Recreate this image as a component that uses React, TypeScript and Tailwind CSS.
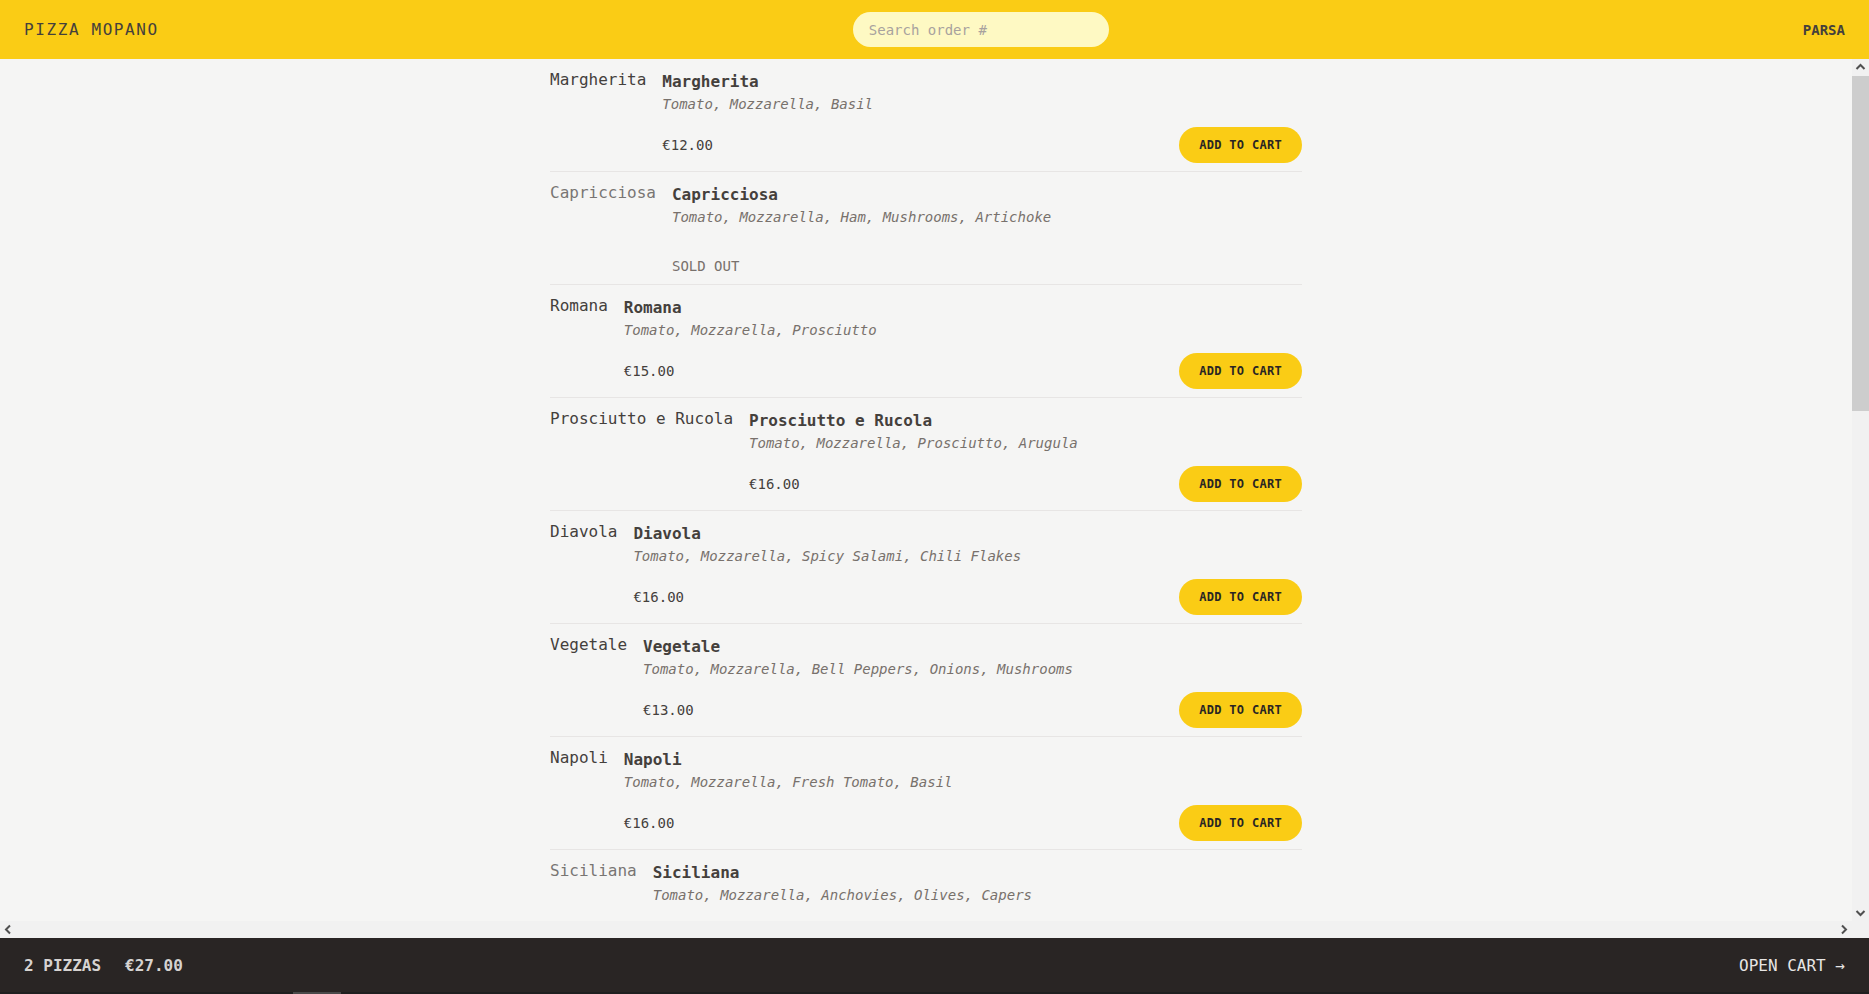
import React from 'react';

interface Pizza {
  id: number;
  name: string;
  unitPrice: number;
  ingredients: string[];
  soldOut: boolean;
}

const menu: Pizza[] = [
  { id: 1, name: 'Margherita', unitPrice: 12, ingredients: ['Tomato', 'Mozzarella', 'Basil'], soldOut: false },
  { id: 2, name: 'Capricciosa', unitPrice: 14, ingredients: ['Tomato', 'Mozzarella', 'Ham', 'Mushrooms', 'Artichoke'], soldOut: true },
  { id: 3, name: 'Romana', unitPrice: 15, ingredients: ['Tomato', 'Mozzarella', 'Prosciutto'], soldOut: false },
  { id: 4, name: 'Prosciutto e Rucola', unitPrice: 16, ingredients: ['Tomato', 'Mozzarella', 'Prosciutto', 'Arugula'], soldOut: false },
  { id: 5, name: 'Diavola', unitPrice: 16, ingredients: ['Tomato', 'Mozzarella', 'Spicy Salami', 'Chili Flakes'], soldOut: false },
  { id: 6, name: 'Vegetale', unitPrice: 13, ingredients: ['Tomato', 'Mozzarella', 'Bell Peppers', 'Onions', 'Mushrooms'], soldOut: false },
  { id: 7, name: 'Napoli', unitPrice: 16, ingredients: ['Tomato', 'Mozzarella', 'Fresh Tomato', 'Basil'], soldOut: false },
  { id: 8, name: 'Siciliana', unitPrice: 16, ingredients: ['Tomato', 'Mozzarella', 'Anchovies', 'Olives', 'Capers'], soldOut: true },
  { id: 9, name: 'Pepperoni', unitPrice: 14, ingredients: ['Tomato', 'Mozzarella', 'Pepperoni'], soldOut: false },
  { id: 10, name: 'Hawaiian', unitPrice: 15, ingredients: ['Tomato', 'Mozzarella', 'Pineapple', 'Ham'], soldOut: false },
  { id: 11, name: 'Spinach and Mushroom', unitPrice: 15, ingredients: ['Tomato', 'Mozzarella', 'Spinach', 'Mushrooms'], soldOut: false },
  { id: 12, name: 'Mediterranean', unitPrice: 16, ingredients: ['Tomato', 'Mozzarella', 'Sun-Dried Tomatoes', 'Olives', 'Artichoke'], soldOut: false },
];

const formatCurrency = (value: number) => `€${value.toFixed(2)}`;

// chevron for the fake scrollbar buttons
function Chevron({ dir }: { dir: 'up' | 'down' | 'left' | 'right' }) {
  const points = {
    up: '4.5,10 8.5,6 12.5,10',
    down: '4.5,7 8.5,11 12.5,7',
    left: '10,4.5 6,8.5 10,12.5',
    right: '7,4.5 11,8.5 7,12.5',
  }[dir];
  return (
    <svg width="17" height="17" viewBox="0 0 17 17" className="block">
      <polyline points={points} fill="none" stroke="#505050" strokeWidth="2" />
    </svg>
  );
}

function Header() {
  return (
    <header className="flex h-[59px] items-center justify-between bg-[#facc15] px-6 uppercase">
      <a href="#" className="text-base tracking-widest text-[#44403c]">Pizza Mopano</a>
      <input
        placeholder="Search order #"
        className="h-[35px] w-64 rounded-full bg-[#fef9c3] px-4 text-sm text-[#44403c] placeholder:text-[#a8a29e] focus:outline-none"
      />
      <p className="text-sm font-semibold text-[#44403c]">Parsa</p>
    </header>
  );
}

function MenuItem({ pizza }: { pizza: Pizza }) {
  const { name, unitPrice, ingredients, soldOut } = pizza;
  return (
    <li className="flex gap-4 py-2">
      <span className={`h-24 shrink-0 pt-px text-base text-[#44403c] ${soldOut ? 'opacity-70' : ''}`}>{name}</span>
      <div className="flex grow flex-col pt-[3px]">
        <p className="text-base font-semibold text-[#44403c]">{name}</p>
        <p className="text-sm italic text-[#78716c]">{ingredients.join(', ')}</p>
        <div className="mt-auto flex items-center justify-between">
          {!soldOut ? (
            <p className="text-sm text-[#44403c]">{formatCurrency(unitPrice)}</p>
          ) : (
            <p className="text-sm uppercase text-[#78716c]">Sold out</p>
          )}
          {!soldOut && (
            <button
              type="button"
              className="inline-block rounded-full bg-[#facc15] px-5 py-2.5 text-xs font-semibold uppercase tracking-wide text-[#292524]"
            >
              Add to cart
            </button>
          )}
        </div>
      </div>
    </li>
  );
}

function CartOverview() {
  return (
    <div className="relative flex items-center justify-between bg-[#292524] px-6 py-4 text-base uppercase text-[#e7e5e4]">
      <p className="space-x-6 font-semibold text-[#d6d3d1]">
        <span>2 pizzas</span>
        <span>{formatCurrency(27)}</span>
      </p>
      <a href="#">Open cart &rarr;</a>
      <div className="absolute bottom-0 left-0 right-0 h-[2px] bg-[#1f1f1f]">
        <div className="ml-[293px] h-full w-[48px] bg-[#4a4a4a]" />
      </div>
    </div>
  );
}

export default function App() {
  return (
    <div
      className="grid h-screen grid-rows-[auto_1fr_auto] bg-[#f5f5f4] text-[#44403c]"
      style={{ fontFamily: '"DejaVu Sans Mono", "Liberation Mono", monospace' }}
    >
      <Header />
      <div className="grid min-h-0 grid-cols-[1fr_17px] grid-rows-[1fr_17px]">
        <div className="min-h-0 overflow-hidden">
          <main className="mx-auto max-w-3xl">
            <ul className="divide-y divide-[#e7e5e4] px-2">
              {menu.map((pizza) => (
                <MenuItem pizza={pizza} key={pizza.id} />
              ))}
            </ul>
          </main>
        </div>
        <div className="flex min-h-0 flex-col bg-[#f1f1f1]">
          <Chevron dir="up" />
          <div className="flex-1">
            <div className="h-[335px] bg-[#cdcdcd]" />
          </div>
          <Chevron dir="down" />
        </div>
        <div className="flex items-center justify-between bg-[#f1f1f1]">
          <Chevron dir="left" />
          <Chevron dir="right" />
        </div>
        <div className="bg-[#f1f1f1]" />
      </div>
      <CartOverview />
    </div>
  );
}
